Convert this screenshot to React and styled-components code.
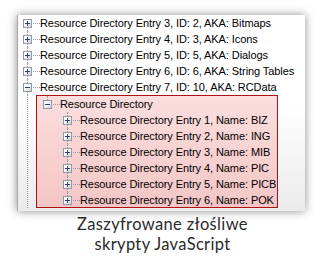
import React from "react";
import styled, { createGlobalStyle } from "styled-components";

const GlobalStyle = createGlobalStyle`
  html, body {
    margin: 0;
    padding: 0;
    background: #ffffff;
  }
`;

const Page = styled.div`
  width: 325px;
  height: 273px;
  padding-top: 15px;
  box-sizing: border-box;
  overflow: hidden;
`;

const Panel = styled.div`
  margin-left: 17px;
  width: 288px;
  height: 196px;
  box-sizing: border-box;
  border-left: 1px solid #a8a8a8;
  background: linear-gradient(#ffffff 45%, #ebebeb);
  box-shadow: 0 0 9px rgba(0, 0, 0, 0.45);
  overflow: hidden;
  font-family: "Liberation Sans", Arial, sans-serif;
  font-size: 11px;
  letter-spacing: -0.08px;
  color: #000;
`;

const Row = styled.div`
  display: flex;
  align-items: center;
  height: ${(p) => p.$height || 16}px;
  white-space: nowrap;
`;

// one 20px column of the tree: the guide line runs through its middle
const Cell = styled.div`
  position: relative;
  flex: none;
  width: 20px;
  height: 100%;

  &::before {
    content: "";
    position: absolute;
    left: 9px;
    top: ${(p) => (p.$top ? "0" : "8px")};
    bottom: ${(p) => (p.$bottom ? "0" : "50%")};
    border-left: 1px dotted #9a9a9a;
  }

  &::after {
    content: "";
    position: absolute;
    left: 10px;
    right: -2px;
    top: 50%;
    border-top: ${(p) => (p.$branch ? "1px dotted #9a9a9a" : "none")};
  }
`;

const Guide = styled.div`
  position: relative;
  flex: none;
  width: ${(p) => p.$width}px;

  &::before {
    content: "";
    position: absolute;
    left: 9px;
    top: 0;
    bottom: 0;
    border-left: 1px dotted #9a9a9a;
  }
`;

const Expander = styled.span`
  position: absolute;
  z-index: 1;
  left: 5px;
  top: calc(50% - 4px);
  width: 9px;
  height: 9px;
  box-sizing: border-box;
  border: 1px solid #8c9aab;
  background: linear-gradient(135deg, #ffffff 30%, #d6d2c8);

  &::before {
    content: "";
    position: absolute;
    left: 1px;
    top: 3px;
    width: 5px;
    height: 1px;
    background: #2a3f86;
  }

  &::after {
    content: "";
    display: ${(p) => (p.$open ? "none" : "block")};
    position: absolute;
    left: 3px;
    top: 1px;
    width: 1px;
    height: 5px;
    background: #2a3f86;
  }
`;

const Label = styled.span`
  padding-left: 2px;
`;

const Group = styled.div`
  display: flex;
`;

const Highlight = styled.div`
  width: 242px;
  box-sizing: border-box;
  border: 1px solid #b01010;
  padding-left: 1px;
  background: linear-gradient(#fbdede, #f3c6c6);
`;

const Caption = styled.div`
  margin-top: 3px;
  display: flex;
  flex-direction: column;
  align-items: center;
  font-family: Lato, "Open Sans", sans-serif;
  font-size: 16.5px;
  line-height: 20px;
  letter-spacing: 0.35px;
  color: #2b2b2b;
`;

const CaptionLine = styled.span`
  display: block;
`;

const TreeItem = ({ label, open, top = true }) => (
  <Row>
    <Cell $top={top} $bottom $branch>
      <Expander $open={open} />
    </Cell>
    <Label>{label}</Label>
  </Row>
);

const rootItems = [
  "Resource Directory Entry 3, ID: 2, AKA: Bitmaps",
  "Resource Directory Entry 4, ID: 3, AKA: Icons",
  "Resource Directory Entry 5, ID: 5, AKA: Dialogs",
  "Resource Directory Entry 6, ID: 6, AKA: String Tables",
];

const children = [
  "Resource Directory Entry 1, Name: BIZ",
  "Resource Directory Entry 2, Name: ING",
  "Resource Directory Entry 3, Name: MIB",
  "Resource Directory Entry 4, Name: PIC",
  "Resource Directory Entry 5, Name: PICB",
  "Resource Directory Entry 6, Name: POK",
];

const NestedRow = ({ label, last }) => (
  <Row $height={last ? 15 : 16}>
    <Cell />
    <Cell $top $bottom={!last} $branch>
      <Expander />
    </Cell>
    <Label>{label}</Label>
  </Row>
);

export default function App() {
  return (
    <>
      <GlobalStyle />
      <Page>
        <Panel>
          {rootItems.map((item, i) => (
            <TreeItem key={item} label={item} top={i > 0} />
          ))}
          <TreeItem label="Resource Directory Entry 7, ID: 10, AKA: RCData" open />
          <Group>
            <Guide $width={18} />
            <Highlight>
              <Row>
                <Cell $top $bottom={false} $branch>
                  <Expander $open />
                </Cell>
                <Label>Resource Directory</Label>
              </Row>
              {children.map((c, i) => (
                <NestedRow key={c} label={c} last={i === children.length - 1} />
              ))}
            </Highlight>
          </Group>
        </Panel>
        <Caption>
          <CaptionLine>Zaszyfrowane złośliwe</CaptionLine>
          <CaptionLine>skrypty JavaScript</CaptionLine>
        </Caption>
      </Page>
    </>
  );
}
